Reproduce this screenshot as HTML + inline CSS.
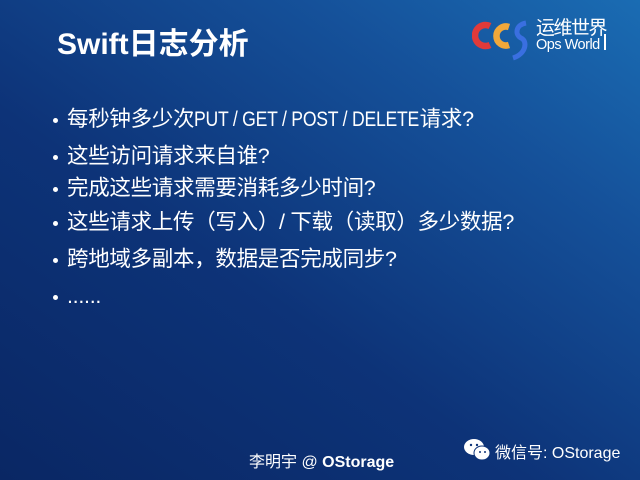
<!DOCTYPE html>
<html><head><meta charset="utf-8"><style>
html,body{margin:0;padding:0}
body{width:640px;height:480px;overflow:hidden;position:relative;
background:linear-gradient(35deg,#0a2764 0%,#0d3378 40%,#15519a 75%,#1a6cb3 100%);
font-family:"Liberation Sans","Noto Sans CJK SC",sans-serif;color:#fff}
.t{position:absolute;left:57px;top:19px;font-size:30px;font-weight:bold}
.li{position:absolute;left:67px;font-size:21.5px;line-height:26px;white-space:nowrap;letter-spacing:-0.3px}
.li:before{content:"";position:absolute;left:-14px;top:12px;width:5px;height:5px;border-radius:50%;background:#fff}
.ab{position:absolute;font-size:15px;white-space:nowrap}
.n{display:inline-block;transform:scaleX(0.82);transform-origin:left;margin-right:-49px}
</style></head><body>
<div class="t">Swift日志分析</div>
<svg style="position:absolute;left:472px;top:16px" width="64" height="46" viewBox="0 0 64 46">
<path d="M18 10 A10.5 10.5 0 1 0 18 29" stroke="#e03a3a" stroke-width="6.5" fill="none"/>
<path d="M37 11 A9.5 9.5 0 1 0 37 29" stroke="#f2a83a" stroke-width="6.5" fill="none"/>
<path d="M54 7 C43 9 43 19 49 22 C56 25 54 38 41 42" stroke="#3a6fe0" stroke-width="5" fill="none"/>
</svg>
<div class="ab" style="left:536px;top:13px;font-size:19px;letter-spacing:-1.5px">运维世界</div>
<div class="ab" style="left:536px;top:37px;font-size:14.5px;letter-spacing:-0.5px">Ops World</div>
<div style="position:absolute;left:604px;top:34px;width:2px;height:16px;background:#fff"></div>
<div class="li" style="top:106px">每秒钟多少次<span class="n">PUT / GET / POST / DELETE</span>请求?</div>
<div class="li" style="top:143px">这些访问请求来自谁?</div>
<div class="li" style="top:175px">完成这些请求需要消耗多少时间?</div>
<div class="li" style="top:209px">这些请求上传（写入）/ 下载（读取）多少数据?</div>
<div class="li" style="top:246px">跨地域多副本，数据是否完成同步?</div>
<div class="li" style="top:283px">......</div>
<div class="ab" style="left:249px;top:448px;font-size:16px">李明宇 @ <b>OStorage</b></div>
<svg style="position:absolute;left:463px;top:437px" width="30" height="26" viewBox="0 0 30 26">
<ellipse cx="11" cy="10" rx="10" ry="8" fill="#fff"/>
<ellipse cx="19" cy="16" rx="8" ry="7" fill="#fff" stroke="#0d3378" stroke-width="1"/>
<circle cx="8" cy="8" r="1.2" fill="#0d3378"/><circle cx="14" cy="8" r="1.2" fill="#0d3378"/>
<circle cx="17" cy="15" r="1" fill="#0d3378"/><circle cx="22" cy="15" r="1" fill="#0d3378"/>
</svg>
<div class="ab" style="left:495px;top:439px;font-size:16px">微信号: OStorage</div>
</body></html>
